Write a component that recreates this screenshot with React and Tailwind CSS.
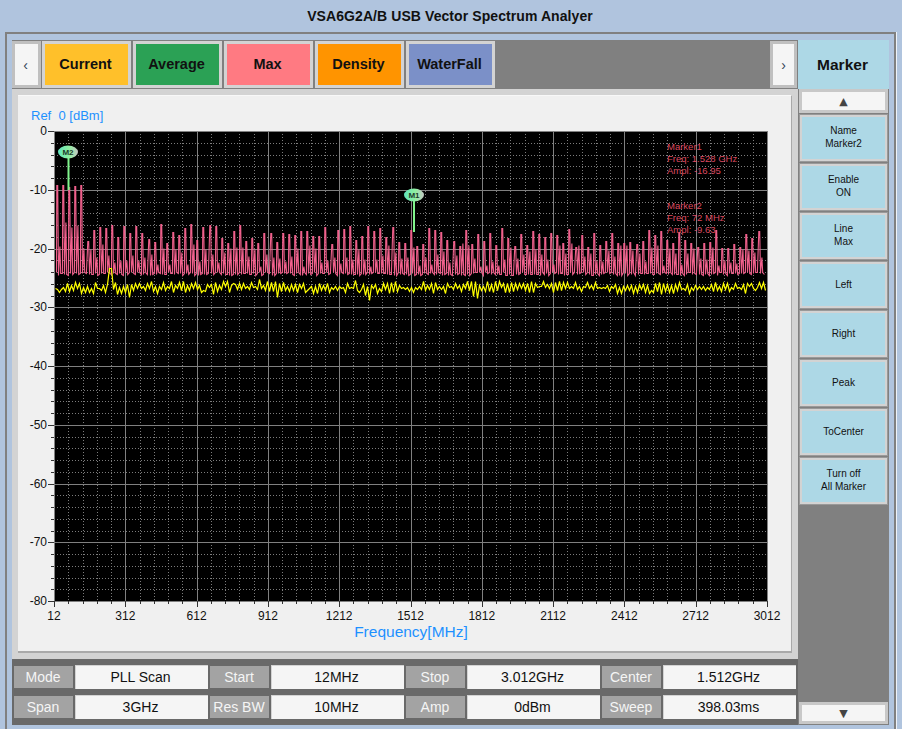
const tabs = [
  { label: 'Current', bg: 'bg-[#ffc02a]' },
  { label: 'Average', bg: 'bg-[#2ba155]' },
  { label: 'Max', bg: 'bg-[#ff7a82]' },
  { label: 'Density', bg: 'bg-[#ff9400]' },
  { label: 'WaterFall', bg: 'bg-[#7b90c8]' },
];

const sideButtons = [
  ['Name', 'Marker2'],
  ['Enable', 'ON'],
  ['Line', 'Max'],
  ['Left'],
  ['Right'],
  ['Peak'],
  ['ToCenter'],
  ['Turn off', 'All Marker'],
];

const statusCells = [
  ['Mode', 'PLL Scan'],
  ['Start', '12MHz'],
  ['Stop', '3.012GHz'],
  ['Center', '1.512GHz'],
  ['Span', '3GHz'],
  ['Res BW', '10MHz'],
  ['Amp', '0dBm'],
  ['Sweep', '398.03ms'],
];

// plot area in page pixels
const left = 54;
const right = 767;
const top = 131;
const bottom = 601;
const xStep = (right - left) / 10;
const yStep = (bottom - top) / 8;
const dbToY = (db) => Math.round(top - db * (yStep / 10)) + 0.5;

// small seeded generator so the traces stay the same on every load
const makeRandom = (seed) => {
  let s = seed;
  return () => {
    s = (s * 16807) % 2147483647;
    return (s - 1) / 2147483646;
  };
};

const buildPink = () => {
  const rnd = makeRandom(4211);
  const pts = [[56.5, dbToY(-24)]];
  const period = 6.1;
  const count = Math.floor((right - 56) / period);
  for (let k = 0; k < count; k++) {
    const x = Math.round(56 + k * period) + 0.5;
    const early = x < 84;
    const drift = ((x - 84) / (right - 84)) * 1.2;
    const peak = early ? -9.2 - rnd() * 0.4 : -15.6 - drift - rnd() * 3.4;
    const mid = early ? -15 - rnd() * 5 : -19 - rnd() * 4;
    pts.push([x + 0.3, dbToY(peak)]);
    pts.push([x + 1.2, dbToY(peak)]);
    pts.push([x + 2, dbToY(-24 - rnd() * 0.5)]);
    pts.push([x + 3.4, dbToY(mid)]);
    pts.push([x + 4.2, dbToY(-24 - rnd() * 0.5)]);
    pts.push([x + 5.9, dbToY(-24 - rnd() * 0.5)]);
  }
  return pts.map(([x, y]) => `${x},${y}`).join(' ');
};

const buildYellow = () => {
  const rnd = makeRandom(977);
  const pts = [];
  let flip = 1;
  for (let x = 55; x < right; x += 2) {
    const slow = Math.sin(x / 47) * 0.8;
    flip = -flip;
    let y = 287 + slow + flip * (rnd() * 6);
    if (rnd() > 0.9) y += (rnd() - 0.4) * 13;
    if (x >= 108 && x <= 112) y = 268;
    pts.push(`${x + 0.5},${Math.round(y) + 0.5}`);
  }
  return pts.join(' ');
};

const pinkTrace = buildPink();
const yellowTrace = buildYellow();

const xLabels = [12, 312, 612, 912, 1212, 1512, 1812, 2112, 2412, 2712, 3012];
const yLabels = [0, -10, -20, -30, -40, -50, -60, -70, -80];

const SpectrumChart = () => {
  const minorX = [];
  for (let i = 0; i <= 50; i++) minorX.push(i);
  const minorY = [];
  for (let i = 0; i <= 40; i++) minorY.push(i);

  return (
    <svg
      viewBox="18 122 773 503"
      width="773"
      height="503"
      className="block shrink-0"
    >
      <rect x={left} y={top} width={right - left} height={bottom - top} fill="#000" />

      {/* dotted grid */}
      <g shapeRendering="crispEdges" stroke="#7c7c7c" strokeDasharray="1 2">
        {minorX.filter((i) => i % 5 !== 0).map((i) => {
          const x = Math.round(left + (i * xStep) / 5) + 0.5;
          return <line key={i} x1={x} x2={x} y1={top} y2={bottom} />;
        })}
        {minorY.filter((i) => i % 5 !== 0).map((i) => {
          const y = Math.round(top + (i * yStep) / 5) + 0.5;
          return <line key={i} x1={left} x2={right} y1={y} y2={y} />;
        })}
      </g>

      {/* major grid */}
      <g shapeRendering="crispEdges" stroke="#808080">
        {xLabels.map((_, i) => {
          const x = Math.round(left + i * xStep) + 0.5;
          return <line key={i} x1={x} x2={x} y1={top} y2={bottom} />;
        })}
        {yLabels.map((_, i) => {
          const y = Math.round(top + i * yStep) + 0.5;
          return <line key={i} x1={left} x2={right} y1={y} y2={y} />;
        })}
      </g>

      {/* axis ticks */}
      <g shapeRendering="crispEdges" stroke="#333">
        {minorY.map((i) => {
          const y = Math.round(top + (i * yStep) / 5) + 0.5;
          return <line key={i} x1={i % 5 === 0 ? 48 : 51} x2={left} y1={y} y2={y} />;
        })}
        {minorX.map((i) => {
          const x = Math.round(left + (i * xStep) / 5) + 0.5;
          return <line key={i} x1={x} x2={x} y1={bottom} y2={i % 5 === 0 ? bottom + 6 : bottom + 3} />;
        })}
      </g>

      <polyline points={pinkTrace} fill="none" stroke="#f0608c" strokeWidth="1.1" />
      <polyline points={yellowTrace} fill="none" stroke="#ffff00" strokeWidth="1.2" />

      {/* markers */}
      <defs>
        <linearGradient id="markerFill" x1="0" x2="1" y1="0" y2="0">
          <stop offset="0" stopColor="#5fe3bd" />
          <stop offset="0.55" stopColor="#8ff0a0" />
          <stop offset="1" stopColor="#c4c8c4" />
        </linearGradient>
      </defs>
      <line x1="68.5" x2="68.5" y1="158" y2="190" stroke="#80f58c" strokeWidth="2" />
      <ellipse cx="68" cy="152" rx="10" ry="6.5" fill="url(#markerFill)" />
      <text x="68" y="155" textAnchor="middle" fontSize="8" fontWeight="700" fill="#1c3a2a">M2</text>
      <line x1="414" x2="414" y1="201" y2="232" stroke="#80f58c" strokeWidth="2" />
      <ellipse cx="414" cy="195" rx="10" ry="6.5" fill="url(#markerFill)" />
      <text x="414" y="198" textAnchor="middle" fontSize="8" fontWeight="700" fill="#1c3a2a">M1</text>

      <g fontSize="9.5" fill="#dd4a60" className="whitespace-pre">
        <text x="667" y="150">Marker1</text>
        <text x="667" y="162">Freq:  1.528 GHz</text>
        <text x="667" y="174">Ampl:  -16.95</text>
        <text x="667" y="209">Marker2</text>
        <text x="667" y="221">Freq:  72 MHz</text>
        <text x="667" y="233">Ampl:  -9.63</text>
      </g>

      {/* axis labels */}
      <g fontSize="12" fill="#111">
        {yLabels.map((v, i) => (
          <text key={v} x="47" y={top + i * yStep + 4} textAnchor="end">{v}</text>
        ))}
        {xLabels.map((v, i) => (
          <text key={v} x={left + i * xStep} y="620" textAnchor="middle">{v}</text>
        ))}
      </g>
    </svg>
  );
};

const SideButton = ({ lines }) => (
  <button className="w-[89px] h-[48px] shrink-0 pb-[2px] border-[3px] border-[#d3d3d3] outline outline-1 -outline-offset-1 outline-[#999] bg-[#add8e6] text-[10px] leading-[13px] text-[#111] flex flex-col items-center justify-center">
    {lines.map((l) => (
      <span key={l}>{l}</span>
    ))}
  </button>
);

const ArrowButton = ({ glyph, className }) => (
  <button className={`w-[89px] shrink-0 border-[3px] border-[#c8c8c8] bg-[#f5f5f5] text-[#444] text-[11px] leading-none flex items-center justify-center font-['DejaVu_Sans',sans-serif] ${className}`}>
    {glyph}
  </button>
);

export default function App() {
  return (
    <div className="w-[902px] h-[729px] overflow-hidden flex flex-col bg-[#b0c4de] font-['Liberation_Sans',Arial,sans-serif] text-black">
      <div className="h-[32px] shrink-0 pr-[2px] flex items-center justify-center text-[14px] tracking-[0.08px] font-bold text-[#111]">
        VSA6G2A/B USB Vector Spectrum Analyer
      </div>

      <div className="flex-1 min-h-0 ml-[5px] mr-[6px] border-2 border-b-0 border-[#808080] shadow-[1px_0_0_#eef2f8] pt-[6px] pl-[5px] pr-[5px] pb-[4px] flex">
        {/* left column */}
        <div className="w-[786px] flex flex-col">
          <div className="h-[49px] shrink-0 bg-[#808080] flex items-center">
            <button className="w-[29px] h-[47px] border-[3px] border-[#c0c0c0] bg-[#f5f5f5] pr-[2px] text-[14px] leading-none text-[#345] flex items-center justify-center">
              ‹
            </button>
            <div className="flex gap-[2px] ml-[1px]">
              {tabs.map((t) => (
                <button
                  key={t.label}
                  className={`w-[89px] h-[47px] border-[3px] border-[#d3d3d3] ${t.bg} pr-[2px] text-[14.5px] font-bold text-[#111] flex items-center justify-center`}
                >
                  {t.label}
                </button>
              ))}
            </div>
            <button className="ml-auto mr-[1px] w-[27px] h-[47px] border-[3px] border-[#c0c0c0] bg-[#f5f5f5] text-[14px] leading-none text-[#345] flex items-center justify-center">
              ›
            </button>
          </div>

          <div className="h-[570px] shrink-0 bg-[#d3d3d3] p-[6px]">
            <div className="h-[558px] bg-[#f0f0f0] border-t border-t-[#f8f8f8] border-r border-r-[#a9a9a9] border-b-2 border-b-[#a9a9a9] flex flex-col">
              <div className="h-[26px] shrink-0 pl-[13px] pt-[13px] text-[13px] leading-[14px] whitespace-pre text-[#1e90ff]">
                Ref  0 [dBm]
              </div>
              <SpectrumChart />
              <div className="text-center text-[15.5px] leading-[18px] -mt-[2px] pl-[13px] text-[#1e90ff]">
                Frequency[MHz]
              </div>
            </div>
          </div>

          <div className="flex-1 bg-[#696969] px-[2px] pt-[6px] grid grid-cols-[59px_133px_59px_133px_59px_133px_59px_133px] auto-rows-[24px] gap-x-[2px] gap-y-[6px]">
            {statusCells.map(([label, value]) => [
              <div
                key={label}
                className="h-[22px] self-center bg-[#a3a3a3] pr-[1px] text-[#f5f5f5] text-[14px] flex items-center justify-center whitespace-nowrap"
              >
                {label}
              </div>,
              <div
                key={value}
                className="bg-[#f5f5f5] border-t border-l border-[#d3d3d3] pr-[3px] text-[14px] text-[#111] flex items-center justify-center"
              >
                {value}
              </div>,
            ])}
          </div>
        </div>

        {/* marker column */}
        <div className="w-[91px] flex flex-col bg-[#808080]">
          <div className="h-[49px] shrink-0 bg-[#add8e6] pr-[2px] text-[15.5px] font-bold text-[#111] flex items-center justify-center">
            Marker
          </div>
          <div className="flex-1 min-h-0 pl-[1px] flex flex-col gap-[1px]">
            <ArrowButton glyph="▲" className="h-[24px]" />
            {sideButtons.map((lines) => (
              <SideButton key={lines.join()} lines={lines} />
            ))}
            <ArrowButton glyph="▼" className="h-[22px] mt-auto mb-[1px]" />
          </div>
        </div>
      </div>
    </div>
  );
}
